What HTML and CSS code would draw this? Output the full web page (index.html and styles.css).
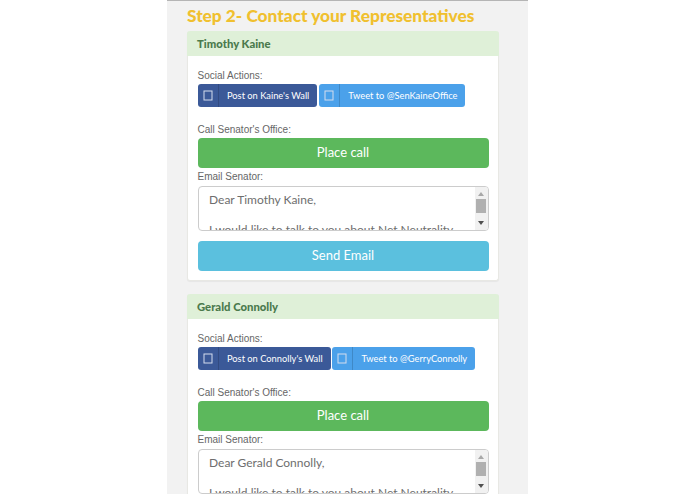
FILE: index.html
```html
<!DOCTYPE html>
<html lang="en">
<head>
<meta charset="utf-8">
<title>Contact your Representatives</title>
<link rel="stylesheet" href="styles.css">
</head>
<body>
<main class="page">
  <h2 class="step">Step 2- Contact your Representatives</h2>

  <section class="panel">
    <h3 class="panel-head">Timothy Kaine</h3>
    <div class="panel-body">
      <p class="label">Social Actions:</p>
      <div class="social">
        <a class="sbtn fb"><span class="ico"><svg width="10" height="11" viewBox="0 0 10 11"><rect x="1" y="1" width="8" height="9" fill="none" stroke="currentColor"/></svg></span><span class="txt">Post on Kaine's Wall</span></a>
        <a class="sbtn tw"><span class="ico"><svg width="10" height="11" viewBox="0 0 10 11"><rect x="1" y="1" width="8" height="9" fill="none" stroke="currentColor"/></svg></span><span class="txt">Tweet to @SenKaineOffice</span></a>
      </div>
      <p class="label call">Call Senator's Office:</p>
      <a class="btn green">Place call</a>
      <p class="label email">Email Senator:</p>
      <div class="area">
        <div class="area-text">Dear Timothy Kaine,<br><br>I would like to talk to you about Net Neutrality</div>
        <div class="bar"><span class="up"></span><span class="thumb"></span><span class="down"></span></div>
      </div>
      <a class="btn blue">Send Email</a>
    </div>
  </section>

  <section class="panel">
    <h3 class="panel-head">Gerald Connolly</h3>
    <div class="panel-body">
      <p class="label">Social Actions:</p>
      <div class="social">
        <a class="sbtn fb"><span class="ico"><svg width="10" height="11" viewBox="0 0 10 11"><rect x="1" y="1" width="8" height="9" fill="none" stroke="currentColor"/></svg></span><span class="txt">Post on Connolly's Wall</span></a>
        <a class="sbtn tw"><span class="ico"><svg width="10" height="11" viewBox="0 0 10 11"><rect x="1" y="1" width="8" height="9" fill="none" stroke="currentColor"/></svg></span><span class="txt">Tweet to @GerryConnolly</span></a>
      </div>
      <p class="label call">Call Senator's Office:</p>
      <a class="btn green">Place call</a>
      <p class="label email">Email Senator:</p>
      <div class="area">
        <div class="area-text">Dear Gerald Connolly,<br><br>I would like to talk to you about Net Neutrality</div>
        <div class="bar"><span class="up"></span><span class="thumb"></span><span class="down"></span></div>
      </div>
      <a class="btn blue">Send Email</a>
    </div>
  </section>
</main>
</body>
</html>
```
FILE: styles.css
```css
html, body { margin: 0; padding: 0; background: #fff; height: 494px; overflow: hidden; }
body { font-family: Lato, "Open Sans", sans-serif; }
.page {
  width: 361px;
  margin: 0 auto;
  background: #f2f2f2;
  border-top: 1px solid #b5b5b5;
  padding: 0 29px 0 20px;
  box-sizing: border-box;
}
.step {
  margin: 0;
  padding: 4px 0 5px;
  font-size: 17.3px;
  line-height: 21px;
  font-weight: 900;
  color: #f0c02f;
  white-space: nowrap;
}
.panel {
  background: #fff;
  border: 1px solid #e8e8e4;
  border-top: 0;
  border-radius: 3px;
  box-shadow: 0 1px 1px rgba(0,0,0,.05);
  margin-bottom: 13.4px;
}
.panel-head {
  margin: 0 -1px;
  height: 25px;
  padding: 0 10px;
  background: #dff0d8;
  border-radius: 3px 3px 0 0;
  font-size: 11.3px;
  line-height: 25px;
  font-weight: 900;
  color: #4b7a4d;
}
.panel-body { padding: 13px 9.5px 9px; }
.label {
  margin: 0;
  font-family: "Liberation Sans", Arial, sans-serif;
  font-size: 10px;
  line-height: 13px;
  color: #666;
}
.social { display: flex; gap: 1.5px; margin-top: 2px; }
.sbtn {
  display: flex;
  align-items: center;
  height: 23px;
  border-radius: 3px;
  color: #fff;
  font-size: 9.3px;
  font-weight: 400;
}
.ico {
  width: 21px;
  height: 23px;
  display: flex;
  align-items: center;
  justify-content: center;
  box-sizing: border-box;
  color: #d5dded;
  border-right: 1px solid rgba(0,0,0,.15);
}
.txt { padding: 0 8px 0 8.5px; white-space: nowrap; }
.fb { background: #3b5998; }
.tw { background: #4ba1ea; }
.call { margin-top: 16px; }
.btn {
  display: block;
  height: 30px;
  margin-top: 2px;
  border-radius: 4px;
  color: #fff;
  font-size: 13px;
  font-weight: 400;
  line-height: 28px;
  text-align: center;
}
.green { background: #5cb85c; }
.blue { background: #5bc0de; margin-top: 10px; }
.email { margin-top: 2px; }
.area {
  position: relative;
  height: 45px;
  margin-top: 3px;
  box-sizing: border-box;
  border: 1px solid #ccc;
  border-radius: 4px;
  overflow: hidden;
}
.area-text {
  padding: 5px 30px 0 10.5px;
  font-size: 12px;
  line-height: 15px;
  color: #6e6e6e;
  white-space: nowrap;
}
.bar {
  position: absolute;
  top: 0;
  right: 0;
  bottom: 0;
  width: 13px;
  background: #f1f1f1;
}
.thumb { position: absolute; top: 12px; left: 1px; width: 10px; height: 14px; background: #b0b0b0; }
.up, .down { position: absolute; left: 3px; width: 0; height: 0; border-left: 3px solid transparent; border-right: 3px solid transparent; }
.up { top: 5px; border-bottom: 4px solid #a8a8a8; }
.down { bottom: 5px; border-top: 4px solid #505050; }
```
